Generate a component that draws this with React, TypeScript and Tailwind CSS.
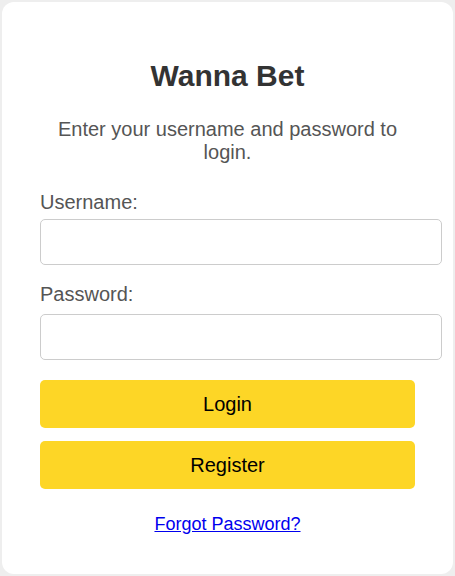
export default function App() {
  return (
    <div className="min-h-[576px] w-[455px] bg-[#eeeeee] p-[2px]" style={{ fontFamily: '"Liberation Sans", Arial, sans-serif' }}>
      <div className="h-[572px] rounded-[12px] bg-white px-[38px] pt-[56px]">
        <h1 className="text-center text-[30px] font-bold leading-[35px] text-[#333333]">Wanna Bet</h1>
        <p className="mt-[25px] px-[10px] text-center text-[20px] leading-[23px] text-[#555555]">
          Enter your username and password to login.
        </p>
        <label className="mt-[27px] block text-[20px] leading-[23px] text-[#555555]">Username:</label>
        <input type="text" className="mt-[5px] block h-[46px] w-[402px] rounded-[5px] border border-[#cccccc] bg-white px-[10px] outline-none" />
        <label className="mt-[18px] block text-[20px] leading-[23px] text-[#555555]">Password:</label>
        <input type="password" className="mt-[8px] block h-[46px] w-[402px] rounded-[5px] border border-[#cccccc] bg-white px-[10px] outline-none" />
        <button className="mt-[20px] flex h-[48px] w-[375px] items-center justify-center rounded-[5px] bg-[#fdd626] text-[20px] text-black">
          Login
        </button>
        <button className="mt-[13px] flex h-[48px] w-[375px] items-center justify-center rounded-[5px] bg-[#fdd626] text-[20px] text-black">
          Register
        </button>
        <div className="mt-[25px] text-center text-[18px] leading-[21px]">
          <a href="#" className="text-[#0000ee] underline">Forgot Password?</a>
        </div>
      </div>
    </div>
  );
}
